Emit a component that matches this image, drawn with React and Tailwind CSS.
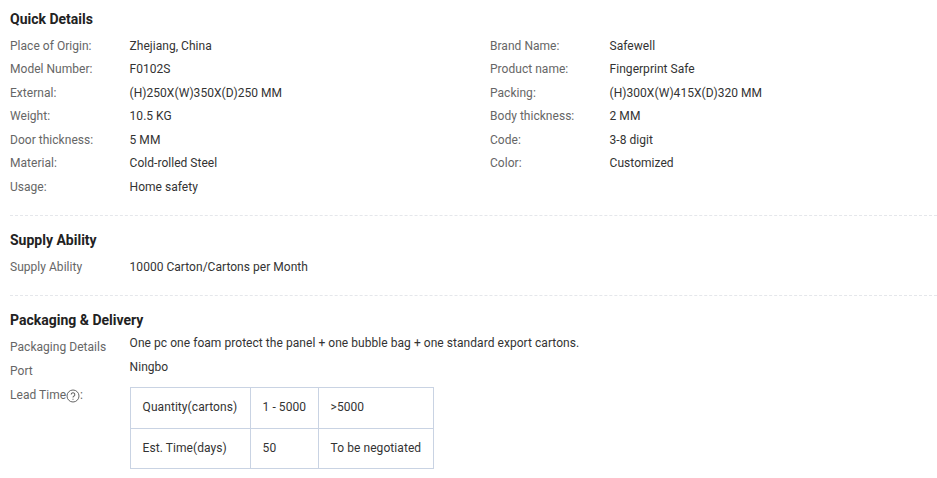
const quickDetails = [
  ["Place of Origin:", "Zhejiang, China", "Brand Name:", "Safewell"],
  ["Model Number:", "F0102S", "Product name:", "Fingerprint Safe"],
  ["External:", "(H)250X(W)350X(D)250 MM", "Packing:", "(H)300X(W)415X(D)320 MM"],
  ["Weight:", "10.5 KG", "Body thickness:", "2 MM"],
  ["Door thickness:", "5 MM", "Code:", "3-8 digit"],
  ["Material:", "Cold-rolled Steel", "Color:", "Customized"],
  ["Usage:", "Home safety", "", ""],
];

const Pair = ({ label, value }) => (
  <div className="flex shrink-0 w-[480px] h-[23.5px] leading-[23.5px]">
    <div className="w-[119.6px] text-[#666]">{label}</div>
    <div className="text-[#333]">{value}</div>
  </div>
);

const Heading = ({ children }) => (
  <h3 className="text-sm font-bold leading-[18px] tracking-normal text-[#222]">{children}</h3>
);

const Cell = ({ children, className }) => (
  <td className={`border border-[#c9d3e3] pl-[11.6px] pb-[2px] tracking-[0.07px] align-middle ${className}`}>{children}</td>
);

const App = () => {
  return (
    <div className="w-[937px] h-[478px] overflow-hidden bg-white pl-2.5 pt-2.5 text-xs tracking-[0.03px] font-['Roboto',sans-serif]">
      <Heading>Quick Details</Heading>
      <div className="mt-[6.9px]">
        {quickDetails.map((row) => (
          <div key={row[0]} className="flex">
            <Pair label={row[0]} value={row[1]} />
            <Pair label={row[2]} value={row[3]} />
          </div>
        ))}
      </div>
      <div className="mt-[15.4px] border-t border-dashed border-[#e5e7eb]" />

      <div className="mt-[15px]">
        <Heading>Supply Ability</Heading>
      </div>
      <div className="mt-[7px]">
        <Pair label="Supply Ability" value="10000 Carton/Cartons per Month" />
      </div>
      <div className="mt-[16px] border-t border-dashed border-[#e5e7eb]" />

      <div className="mt-[15px]">
        <Heading>Packaging &amp; Delivery</Heading>
      </div>
      <div className="flex mt-[2px]">
        <div className="w-[119.6px] text-[#666] pt-[4px]">
          <div className="h-[24px] leading-[24px]">Packaging Details</div>
          <div className="h-[24px] leading-[24px]">Port</div>
          <div className="flex items-center h-[24px] leading-[24px]">
            Lead Time
            <svg width="14" height="14" viewBox="0 0 14 14" className="mt-[2px]" fill="none" stroke="#666">
              <circle cx="7" cy="7" r="6" />
              <path d="M5.2 5.6a1.8 1.8 0 1 1 2.6 1.6c-.6.3-.8.7-.8 1.3" strokeWidth="1.1" />
              <path d="M7 9.8v1" strokeWidth="1.1" />
            </svg>
            :
          </div>
        </div>
        <div className="text-[#333]">
          <div className="h-[24px] leading-[24px] tracking-[0.05px]">
            One pc one foam protect the panel + one bubble bag + one standard export cartons.
          </div>
          <div className="h-[24px] leading-[24px]">Ningbo</div>
          <table className="mt-[8px] ml-[0.4px] border-collapse">
            <tbody>
              <tr className="h-[41px]">
                <Cell className="w-[120px]">Quantity(cartons)</Cell>
                <Cell className="w-[68px]">1 - 5000</Cell>
                <Cell className="w-[115px]">&gt;5000</Cell>
              </tr>
              <tr className="h-[40px]">
                <Cell>Est. Time(days)</Cell>
                <Cell>50</Cell>
                <Cell>To be negotiated</Cell>
              </tr>
            </tbody>
          </table>
        </div>
      </div>
    </div>
  );
};

export default App;
